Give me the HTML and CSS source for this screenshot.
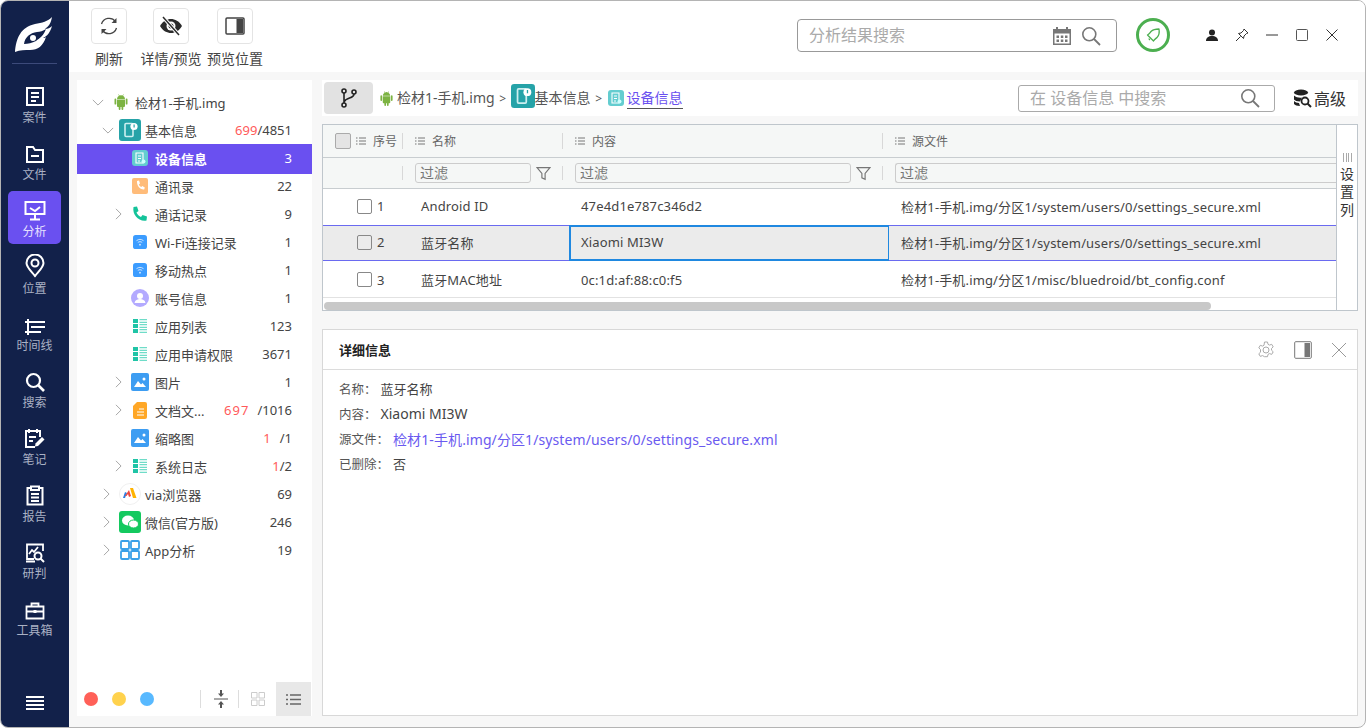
FILE: index.html
```html
<!DOCTYPE html>
<html lang="zh-CN">
<head>
    <meta charset="UTF-8">
    <title>分析</title>
    <link rel="stylesheet" href="styles.css">
</head>
<body>
    <svg class="sprite" xmlns="http://www.w3.org/2000/svg">
        <symbol id="android" viewBox="0 0 16 16"><path fill="#7cb342" d="M4 5.500h8v6.600a1 1 0 0 1-1 1h-.7V15a.9.9 0 0 1-1.800 0v-1.900H7.500V15a.9.9 0 0 1-1.800 0v-1.900H5a1 1 0 0 1-1-1zM1.500 5.500a.9.9 0 0 1 1.800 0v4.200a.9.9 0 0 1-1.800 0zM12.700 5.500a.9.9 0 0 1 1.800 0v4.200a.9.9 0 0 1-1.800 0zM4 5a4 4 0 0 1 2-3.200L5.200.6l.4-.3.900 1.200a4 4 0 0 1 3 0l.9-1.200.4.300-.8 1.200A4 4 0 0 1 12 5z"/></symbol>
        <symbol id="info" viewBox="0 0 22 22"><rect width="22" height="22" rx="3" fill="#26a3a8"/><rect x="6" y="4.500" width="8" height="13" rx="1" fill="none" stroke="#cdeff0" stroke-width="1.600"/><circle cx="15" cy="7.500" r="3.600" fill="#fff"/><rect x="14.500" y="5.500" width="1.200" height="3" fill="#26a3a8"/></symbol>
        <symbol id="device" viewBox="0 0 16 16"><rect width="16" height="16" rx="3" fill="#63cdd0"/><path d="M4 3h7v10H4zM6 6h3M6 8.500h3M6 11h2" fill="none" stroke="#fff" stroke-width="1.100"/><circle cx="11.500" cy="11.500" r="2" fill="#cff"/></symbol>
        <symbol id="wifi" viewBox="0 0 16 16"><rect width="16" height="16" rx="3" fill="#3b9cff"/><path d="M4 6.500c2.500-2 5.500-2 8 0M5.500 8.500c1.500-1.100 3.500-1.100 5 0" fill="none" stroke="#cfe6ff" stroke-width="1.100"/><circle cx="8" cy="11" r="1.100" fill="#cfe6ff"/></symbol>
        <symbol id="lines" viewBox="0 0 14 16"><path fill="#1fc4a6" d="M0 1h5v4H0zM0 6h5v4H0zM0 11h5v4H0z"/><path fill="#6fdcc8" d="M6.500 1H14v1.300H6.500zM6.500 3.700H14V5H6.500zM6.500 6H14v1.300H6.500zM6.500 8.700H14V10H6.500zM6.500 11H14v1.300H6.500zM6.500 13.700H14V15H6.500z"/></symbol>
        <symbol id="pic" viewBox="0 0 18 18"><rect width="18" height="18" rx="2" fill="#3d9df2"/><path fill="#fff" d="M3 14l4-6 3 3.500 1.500-1.500 3.500 4z"/><circle cx="13" cy="6" r="1.500" fill="#fff"/></symbol>
        <symbol id="rows" viewBox="0 0 10 8"><path fill="none" stroke="#777" d="M0 1h1.500M3 1h7M0 4h1.500M3 4h7M0 7h1.500M3 7h7"/></symbol>
        <symbol id="funnel" viewBox="0 0 14 14"><path fill="none" stroke="#777" stroke-width="1.100" d="M1 1.500h12L8.500 7v5.500l-3-1.500V7z"/></symbol>
        <symbol id="glass" viewBox="0 0 20 20"><circle cx="8.300" cy="8.300" r="6.500" fill="none" stroke="#777" stroke-width="1.600"/><path d="M13 13l6 6" stroke="#777" stroke-width="1.800"/></symbol>
        <symbol id="right" viewBox="0 0 8 14"><path fill="none" stroke="#999" d="M1 1l6 6-6 6"/></symbol>
        <symbol id="down" viewBox="0 0 14 8"><path fill="none" stroke="#999" d="M1 1l6 6 6-6"/></symbol>
    </svg>

    <div class="app">
        <nav class="sidebar">
            <div class="logo">
                <svg width="38" height="36" viewBox="0 0 38 36"><path fill="#fff" d="M0 35C1 21 6 10 20 7c7-1 13-3 17-7-1 6-3 9-7 12 3 0 5-1 7-3-2 7-5 10-9 12 1 0 2 0 3-1-3 9-8 13-16 13-5 0-10 0-15 2z"/><path fill="#12214a" d="M9 27c1-7 6-11 13-12 3 0 6-1 9-3-2 6-6 9-10 12-4 2-8 3-12 3z"/><circle cx="18" cy="21" r="3" fill="#fff"/></svg>
            </div>
            <a class="nav-item">
                <svg width="20" height="21" viewBox="0 0 20 21"><path fill="none" stroke="#fff" stroke-width="2" d="M2 2h16v17H2zM6 7h8M6 11h8M6 15h5"/></svg>
                <span>案件</span>
            </a>
            <a class="nav-item">
                <svg width="20" height="19" viewBox="0 0 20 19"><path fill="none" stroke="#fff" stroke-width="2" d="M2 2h6l2 3h8v12H2zM6 11h8"/></svg>
                <span>文件</span>
            </a>
            <a class="nav-item active">
                <svg width="22" height="21" viewBox="0 0 22 21"><path fill="none" stroke="#fff" stroke-width="2" d="M1.500 2h19v12h-19zM6 8l5 3 5-4M11 14v5M6 19.500h10"/></svg>
                <span>分析</span>
            </a>
            <a class="nav-item">
                <svg width="20" height="24" viewBox="0 0 20 24"><path fill="none" stroke="#fff" stroke-width="2" d="M10 22C5 16 1.500 13 1.500 9a8.500 8.500 0 0 1 17 0c0 4-3.500 7-8.500 13z"/><circle cx="10" cy="9" r="3.500" fill="none" stroke="#fff" stroke-width="2"/></svg>
                <span>位置</span>
            </a>
            <a class="nav-item">
                <svg width="20" height="16" viewBox="0 0 20 16"><path fill="none" stroke="#fff" stroke-width="2" d="M3 0v16M0 3h20M6 8h14M0 13h16"/></svg>
                <span>时间线</span>
            </a>
            <a class="nav-item">
                <svg width="20" height="20" viewBox="0 0 20 20"><circle cx="8.500" cy="8.500" r="6.500" fill="none" stroke="#fff" stroke-width="2.200"/><path d="M13 13l6 6" stroke="#fff" stroke-width="2.600"/></svg>
                <span>搜索</span>
            </a>
            <a class="nav-item">
                <svg width="21" height="21" viewBox="0 0 21 21"><path fill="none" stroke="#fff" stroke-width="2" d="M16 9V3H2v16h9M5 1v4M13 1v4M5 9h7M5 13h4"/><path fill="#fff" d="M18 9l2.500 2.500L14 18l-3 .5.500-3z"/></svg>
                <span>笔记</span>
            </a>
            <a class="nav-item">
                <svg width="18" height="21" viewBox="0 0 18 21"><path fill="none" stroke="#fff" stroke-width="2" d="M5 3H1.500v16.500h15V3H13M5 1.500h8V5H5zM5 9h8M5 12.500h8M5 16h8"/></svg>
                <span>报告</span>
            </a>
            <a class="nav-item">
                <svg width="20" height="20" viewBox="0 0 20 20"><path fill="none" stroke="#fff" stroke-width="1.800" d="M18 8V1.500H2V16h7M1 18.500h9M4 11l3-4 2 2 4-5"/><circle cx="13" cy="13" r="3.500" fill="none" stroke="#fff" stroke-width="2"/><path d="M15.500 15.500l3.500 3.500" stroke="#fff" stroke-width="2"/></svg>
                <span>研判</span>
            </a>
            <a class="nav-item">
                <svg width="20" height="18" viewBox="0 0 20 18"><path fill="none" stroke="#fff" stroke-width="1.800" d="M1.500 4.500h17v12h-17zM6.500 4.500V1.500h7v3M1.500 9.500h17"/><rect x="8.500" y="8" width="3" height="3" fill="#fff"/></svg>
                <span>工具箱</span>
            </a>
            <div class="hamburger"><i></i><i></i><i></i><i></i></div>
        </nav>

        <div class="main">
            <header class="topbar">
                <div class="tool">
                    <div class="tool-btn">
                        <svg width="20" height="20" viewBox="0 0 20 20"><path fill="none" stroke="#444" stroke-width="1.300" d="M2.500 8a8 8 0 0 1 14-2.500M17.500 12a8 8 0 0 1-14 2.500"/><path fill="#444" d="M17.500 2v5h-5zM2.500 18v-5h5z"/></svg>
                    </div>
                    <span>刷新</span>
                </div>
                <div class="tool">
                    <div class="tool-btn">
                        <svg width="22" height="20" viewBox="0 0 22 20"><path fill="#2b2b2b" d="M0 10c3-5 7-7 11-7s8 2 11 7c-3 5-7 7-11 7s-8-2-11-7z"/><circle cx="11" cy="10" r="4.500" fill="#fff"/><circle cx="11" cy="10" r="2.500" fill="#2b2b2b"/><path d="M3 1l16 18" stroke="#fff" stroke-width="3.500"/><path d="M3 1l16 18" stroke="#2b2b2b" stroke-width="1.500"/></svg>
                    </div>
                    <span>详情/预览</span>
                </div>
                <div class="tool">
                    <div class="tool-btn">
                        <svg width="20" height="18" viewBox="0 0 20 18"><rect x="1" y="1" width="18" height="16" rx="1" fill="none" stroke="#444" stroke-width="1.500"/><rect x="11.500" y="2" width="6.500" height="14" fill="#444"/></svg>
                    </div>
                    <span>预览位置</span>
                </div>
                <div class="top-search">
                    <span class="placeholder">分析结果搜索</span>
                    <svg width="20" height="20" viewBox="0 0 20 20"><path fill="#777" d="M1 3h18v16H1zM2.500 7.500v10h15v-10z"/><path fill="#777" d="M4 1h2v4H4zM14 1h2v4h-2zM4.500 9.500h2.500V12H4.500zM8.800 9.500h2.500V12H8.800zM13 9.500h2.500V12H13zM4.500 13.500h2.500V16H4.500zM8.800 13.500h2.500V16H8.800zM13 13.500h2.500V16H13z"/></svg>
                    <svg class="glass-icon" width="20" height="20"><use href="#glass"/></svg>
                </div>
                <div class="bell">
                    <svg width="18" height="18" viewBox="0 0 18 18"><path fill="none" stroke="#4caf50" stroke-width="1.300" stroke-linejoin="round" d="M15 3c-3 0-6 .5-8 2.500-1 1-1.500 2.500-3.500 3.500l6 6c1-2 2.500-2.500 3.500-3.500 2-2 2.500-5.500 2-8.500zM5 12.500a2 2 0 0 0 1 1.500"/></svg>
                </div>
                <div class="win-btns">
                    <svg width="14" height="14" viewBox="0 0 14 14"><circle cx="7" cy="4.500" r="3" fill="#222"/><path fill="#222" d="M1 13c0-3.500 2.500-5 6-5s6 1.500 6 5z"/></svg>
                    <svg width="14" height="14" viewBox="0 0 14 14"><path fill="none" stroke="#333" d="M9 1l4 4-1.500.5L9 8l-.5 2.500L3.500 5.500 6 5l2.500-2.500zM5.500 8.500L1 13"/></svg>
                    <svg width="14" height="14" viewBox="0 0 14 14"><path stroke="#333" d="M1 7h12"/></svg>
                    <svg width="14" height="14" viewBox="0 0 14 14"><rect x="1.500" y="1.500" width="11" height="11" rx="1" fill="none" stroke="#555"/></svg>
                    <svg width="14" height="14" viewBox="0 0 14 14"><path stroke="#333" d="M1.500 1.500l11 11M12.500 1.500l-11 11"/></svg>
                </div>
            </header>

            <div class="content">
                <aside class="tree">
                    <div class="row lv0"><svg class="arrow" width="12" height="7"><use href="#down"/></svg><svg class="ic" width="16" height="16"><use href="#android"/></svg><span class="name">检材1-手机.img</span></div>
                    <div class="row lv1"><svg class="arrow" width="12" height="7"><use href="#down"/></svg><svg class="ic-big" width="22" height="22"><use href="#info"/></svg><span class="name">基本信息</span><span class="count"><b>699</b>/4851</span></div>
                    <div class="row lv2 selected"><svg class="ic" width="16" height="16"><use href="#device"/></svg><span class="name">设备信息</span><span class="count">3</span></div>
                    <div class="row lv2"><svg class="ic" width="16" height="16" viewBox="0 0 16 16"><rect width="16" height="16" rx="2" fill="#ffbc7a"/><path fill="#fff" d="M5 3l2-.5 1 3-1.200 1c.5 1.300 1.200 2 2.500 2.600l1-1.100 2.500 1.500-.6 2c-4 .5-7.500-3.500-7.200-8.500z"/></svg><span class="name">通讯录</span><span class="count">22</span></div>
                    <div class="row lv2"><svg class="arrow" width="7" height="12"><use href="#right"/></svg><svg class="ic" width="16" height="16" viewBox="0 0 16 16"><path fill="#14c39a" d="M1.500 1L5 .5l1.500 4.500-2 1.500c1 2 2.500 3.500 4.500 4.500l1.500-2L15 10.500l-.5 4C7 16 0 9 1.500 1z"/></svg><span class="name">通话记录</span><span class="count">9</span></div>
                    <div class="row lv2"><svg class="ic" width="14" height="14"><use href="#wifi"/></svg><span class="name">Wi-Fi连接记录</span><span class="count">1</span></div>
                    <div class="row lv2"><svg class="ic" width="14" height="14"><use href="#wifi"/></svg><span class="name">移动热点</span><span class="count">1</span></div>
                    <div class="row lv2"><svg class="ic" width="18" height="18" viewBox="0 0 18 18"><circle cx="9" cy="9" r="9" fill="#b3aaff"/><circle cx="9" cy="7" r="3" fill="#fff"/><path fill="#fff" d="M3.500 14c.5-3 3-4 5.500-4s5 1 5.500 4z"/></svg><span class="name">账号信息</span><span class="count">1</span></div>
                    <div class="row lv2"><svg class="ic" width="14" height="16"><use href="#lines"/></svg><span class="name">应用列表</span><span class="count">123</span></div>
                    <div class="row lv2"><svg class="ic" width="14" height="16"><use href="#lines"/></svg><span class="name">应用申请权限</span><span class="count">3671</span></div>
                    <div class="row lv2"><svg class="arrow" width="7" height="12"><use href="#right"/></svg><svg class="ic" width="18" height="18"><use href="#pic"/></svg><span class="name">图片</span><span class="count">1</span></div>
                    <div class="row lv2"><svg class="arrow" width="7" height="12"><use href="#right"/></svg><svg class="ic" width="14" height="17" viewBox="0 0 14 17"><path fill="#ffa726" d="M4 0h8a2 2 0 0 1 2 2v13a2 2 0 0 1-2 2H2a2 2 0 0 1-2-2V4z"/><path stroke="#fff" d="M6 7h5M4 10h7M4 13h7"/></svg><span class="name">文档文...</span><span class="count"><b class="wide">697</b>/1016</span></div>
                    <div class="row lv2"><svg class="ic" width="18" height="18"><use href="#pic"/></svg><span class="name">缩略图</span><span class="count"><b class="wide">1</b>/1</span></div>
                    <div class="row lv2"><svg class="arrow" width="7" height="12"><use href="#right"/></svg><svg class="ic" width="14" height="16"><use href="#lines"/></svg><span class="name">系统日志</span><span class="count"><b>1</b>/2</span></div>
                    <div class="row lv1"><svg class="arrow" width="7" height="12"><use href="#right"/></svg><svg class="ic-big" width="22" height="22" viewBox="0 0 22 22"><circle cx="11" cy="11" r="10.500" fill="#fff" stroke="#f0f0f0"/><path fill="#2f7de1" d="M4 15l2-6 2 1-2 5z"/><path fill="#f0483e" d="M6 13l4-6 2 6-2 1-1-3-1.500 2z"/><path fill="#ffb300" d="M11 5h3l3.500 10h-3.500z"/></svg><span class="name">via浏览器</span><span class="count">69</span></div>
                    <div class="row lv1"><svg class="arrow" width="7" height="12"><use href="#right"/></svg><svg class="ic-big" width="22" height="22" viewBox="0 0 22 22"><rect width="22" height="22" rx="3" fill="#14c95f"/><ellipse cx="9" cy="9.500" rx="6" ry="5" fill="#fff"/><ellipse cx="14.500" cy="13" rx="5" ry="4" fill="#fff" stroke="#14c95f"/></svg><span class="name">微信(官方版)</span><span class="count">246</span></div>
                    <div class="row lv1"><svg class="arrow" width="7" height="12"><use href="#right"/></svg><svg class="ic-big" width="22" height="22" viewBox="0 0 22 22"><path fill="none" stroke="#3aa0e8" stroke-width="1.800" d="M3 2h6a1 1 0 0 1 1 1v6a1 1 0 0 1-1 1H3a1 1 0 0 1-1-1V3a1 1 0 0 1 1-1zM13 2h6a1 1 0 0 1 1 1v6a1 1 0 0 1-1 1h-6a1 1 0 0 1-1-1V3a1 1 0 0 1 1-1zM3 12h6a1 1 0 0 1 1 1v6a1 1 0 0 1-1 1H3a1 1 0 0 1-1-1v-6a1 1 0 0 1 1-1zM13 12h6a1 1 0 0 1 1 1v6a1 1 0 0 1-1 1h-6a1 1 0 0 1-1-1v-6a1 1 0 0 1 1-1z"/></svg><span class="name">App分析</span><span class="count">19</span></div>

                    <div class="tree-foot">
                        <i class="dot red"></i><i class="dot yellow"></i><i class="dot blue"></i>
                        <div class="foot-tools">
                            <svg class="foot-btn sep" width="14" height="18" viewBox="0 0 14 18"><path stroke="#555" d="M0 9h14"/><path fill="#555" d="M7 7L4 3.500h2V0h2v3.500h2zM7 11l3 3.500H8V18H6v-3.500H4z"/></svg>
                            <div class="foot-btn sep"><svg width="14" height="14" viewBox="0 0 14 14"><path fill="none" stroke="#ccc" d="M.5.500h5.500v5.500H.5zM8 .5h5.500v5.500H8zM.5 8h5.500v5.500H.5zM8 8h5.500v5.500H8z"/></svg></div>
                            <div class="foot-btn on"><svg width="15" height="11" viewBox="0 0 15 11"><path stroke="#666" stroke-width="1.500" d="M0 1h2M4 1h11M0 5.500h2M4 5.500h11M0 10h2M4 10h11"/></svg></div>
                        </div>
                    </div>
                </aside>

                <section class="right">
                    <div class="crumbs">
                        <button class="branch"><svg width="18" height="20" viewBox="0 0 18 20"><g fill="none" stroke="#222" stroke-width="1.600"><circle cx="4" cy="3" r="2"/><circle cx="4" cy="17" r="2"/><circle cx="14" cy="4" r="2"/><path d="M4 5v10M14 6c0 5-8 3-10 8"/></g></svg></button>
                        <svg class="c-android" width="15" height="15"><use href="#android"/></svg>
                        <span class="c-text">检材1-手机.img</span>
                        <span class="c-sep">&gt;</span>
                        <svg class="c-info" width="24" height="24"><use href="#info"/></svg>
                        <span class="c-text">基本信息</span>
                        <span class="c-sep">&gt;</span>
                        <svg class="c-device" width="16" height="16"><use href="#device"/></svg>
                        <span class="c-current">设备信息</span>
                        <div class="sub-search">
                            <span class="placeholder">在 设备信息 中搜索</span>
                            <svg width="20" height="20"><use href="#glass"/></svg>
                        </div>
                        <div class="advanced">
                            <svg width="19" height="19" viewBox="0 0 19 19"><ellipse cx="8" cy="3.500" rx="7" ry="3" fill="#222"/><path fill="#222" d="M1 6.500c2 2 6 2.500 8 2l-2 4c-3 0-5-1-6-2zM1 12c1 1 3 2 5 2l1 3c-3 0-5-1-6-2z"/><circle cx="12" cy="12" r="3.500" fill="#fff" stroke="#222" stroke-width="1.800"/><path d="M14.500 14.500L18 18" stroke="#222" stroke-width="2"/></svg>
                            <span>高级</span>
                        </div>
                    </div>

                    <div class="grid-box">
                        <div class="grid-main">
                            <div class="tr head">
                                <div class="th first"><i class="head-check"></i><svg width="10" height="8"><use href="#rows"/></svg>序号</div>
                                <div class="th"><svg width="10" height="8"><use href="#rows"/></svg>名称</div>
                                <div class="th"><svg width="10" height="8"><use href="#rows"/></svg>内容</div>
                                <div class="th"><svg width="10" height="8"><use href="#rows"/></svg>源文件</div>
                            </div>
                            <div class="tr filters">
                                <div class="th first"></div>
                                <div class="th"><span class="filter">过滤</span><svg width="15" height="15"><use href="#funnel"/></svg></div>
                                <div class="th"><span class="filter">过滤</span><svg width="15" height="15"><use href="#funnel"/></svg></div>
                                <div class="th"><span class="filter open">过滤</span></div>
                            </div>
                            <div class="tr body r1">
                                <div class="td first"><i class="check"></i>1</div>
                                <div class="td">Android ID</div>
                                <div class="td">47e4d1e787c346d2</div>
                                <div class="td">检材1-手机.img/分区1/system/users/0/settings_secure.xml</div>
                            </div>
                            <div class="tr body current r2">
                                <div class="td first"><i class="check"></i>2</div>
                                <div class="td">蓝牙名称</div>
                                <div class="td focus">Xiaomi MI3W</div>
                                <div class="td">检材1-手机.img/分区1/system/users/0/settings_secure.xml</div>
                            </div>
                            <div class="tr body r3">
                                <div class="td first"><i class="check"></i>3</div>
                                <div class="td">蓝牙MAC地址</div>
                                <div class="td">0c:1d:af:88:c0:f5</div>
                                <div class="td">检材1-手机.img/分区1/misc/bluedroid/bt_config.conf</div>
                            </div>
                            <div class="scroll"><div class="thumb"></div></div>
                        </div>
                        <div class="col-set">
                            <span class="col-bars"></span>
                            <span>设</span><span>置</span><span>列</span>
                        </div>
                    </div>

                    <div class="detail">
                        <div class="detail-head">
                            <span>详细信息</span>
                            <div class="detail-tools">
                                <svg width="18" height="18" viewBox="0 0 18 18"><circle cx="9" cy="9" r="3" fill="none" stroke="#aaa"/><path fill="none" stroke="#aaa" d="M7.500 1h3l.5 2.300 1.500.8 2.200-.8 1.500 2.600-1.700 1.600v1.700l1.700 1.600-1.500 2.600-2.200-.8-1.500.8-.5 2.300h-3L7 15.400l-1.500-.8-2.200.8-1.500-2.600 1.700-1.600V8.500L1.800 6.900l1.500-2.600 2.200.8L7 4.300z"/></svg>
                                <svg width="18" height="18" viewBox="0 0 18 18"><rect x=".7" y=".7" width="16.600" height="16.600" rx="1" fill="none" stroke="#777"/><rect x="10.500" y="2" width="5.500" height="14" fill="#777"/></svg>
                                <svg width="16" height="16" viewBox="0 0 16 16"><path stroke="#999" d="M1 1l14 14M15 1L1 15"/></svg>
                            </div>
                        </div>
                        <div class="detail-body">
                            <div class="kv"><label>名称：</label><span class="cjk">蓝牙名称</span></div>
                            <div class="kv"><label>内容：</label><span>Xiaomi MI3W</span></div>
                            <div class="kv"><label>源文件：</label><a>检材1-手机.img/分区1/system/users/0/settings_secure.xml</a></div>
                            <div class="kv"><label>已删除：</label><span class="cjk">否</span></div>
                        </div>
                    </div>
                </section>
            </div>
        </div>
    </div>
</body>
</html>
```

FILE: styles.css
```css
html, body {
    margin: 0;
    height: 100%;
    overflow: hidden;
}

body {
    font-family: "Noto Sans", "Noto Sans CJK SC", sans-serif;
    font-size: 13px;
    color: #444;
    background: #fff;
}

.sprite {
    display: none;
}

.app {
    display: flex;
    width: 1366px;
    height: 728px;
    box-sizing: border-box;
    border: 1px solid #b4b4b4;
    border-radius: 8px;
    overflow: hidden;
    background: #f7f7f7;
}

/* left nav */
.sidebar {
    width: 68px;
    flex-shrink: 0;
    box-sizing: border-box;
    padding-right: 1px;
    display: flex;
    flex-direction: column;
    align-items: center;
    background: #12214a;
}

.logo {
    width: 45px;
    height: 63px;
    box-sizing: border-box;
    padding-top: 16px;
    padding-left: 3px;
    margin-bottom: 13px;
    border-bottom: 1px solid #3c4a7a;
}

.nav-item {
    width: 53px;
    height: 53px;
    margin-bottom: 4px;
    display: flex;
    flex-direction: column;
    align-items: center;
    justify-content: flex-end;
    gap: 2px;
    border-radius: 5px;
    color: #aab1c4;
    font-size: 12px;
    line-height: 17px;
}

.nav-item span {
    padding-bottom: 4px;
}

.nav-item.active {
    background: #6a50f0;
    color: #e6e0ff;
}

.hamburger {
    margin-top: auto;
    margin-bottom: 17px;
    width: 18px;
    display: flex;
    flex-direction: column;
    gap: 2px;
}

.hamburger i {
    display: block;
    height: 2px;
    background: #fff;
}

.main {
    flex: 1;
    display: flex;
    flex-direction: column;
    min-width: 0;
}

/* top toolbar */
.topbar {
    height: 71px;
    flex-shrink: 0;
    display: flex;
    background: #fff;
    box-sizing: border-box;
    padding: 7px 26px 0 22px;
}

.tool {
    display: flex;
    flex-direction: column;
    align-items: center;
    width: 36px;
    margin-right: 26px;
    color: #444;
    font-size: 14px;
    white-space: nowrap;
    line-height: 18px;
    gap: 6px;
}

.tool:nth-child(2) {
    margin-right: 28px;
}

.tool-btn {
    width: 36px;
    height: 36px;
    flex-shrink: 0;
    box-sizing: border-box;
    border: 1px solid #e4e4e4;
    border-radius: 4px;
    display: flex;
    align-items: center;
    justify-content: center;
}

.top-search {
    margin-left: auto;
    margin-top: 11px;
    width: 320px;
    height: 33px;
    box-sizing: border-box;
    border: 1px solid #999;
    border-radius: 4px;
    display: flex;
    align-items: center;
    padding: 0 15px 0 11px;
}

.placeholder {
    flex: 1;
    padding-bottom: 3px;
    font-size: 16px;
    color: #aaa;
}

.glass-icon {
    margin-left: 9px;
}

.bell {
    width: 34px;
    height: 34px;
    box-sizing: border-box;
    margin: 10px 0 0 19px;
    border: 3px solid #4caf50;
    border-radius: 50%;
    display: flex;
    align-items: center;
    justify-content: center;
}

.win-btns {
    display: flex;
    align-items: center;
    gap: 16px;
    height: 54px;
    margin-left: 35px;
}

/* tree panel */
.content {
    flex: 1;
    display: flex;
    padding: 8px 7px 11px 8px;
    min-height: 0;
}

.tree {
    width: 235px;
    flex-shrink: 0;
    display: flex;
    flex-direction: column;
    box-sizing: border-box;
    padding-top: 9px;
    background: #fff;
}

.row {
    position: relative;
    display: flex;
    align-items: center;
    height: 28px;
    flex-shrink: 0;
    box-sizing: border-box;
    padding-right: 20px;
    padding-bottom: 2px;
    color: #444;
    white-space: nowrap;
}

.row .arrow {
    position: absolute;
}

.lv0 .arrow { left: 15px; }
.lv1 .arrow { left: 26px; }
.lv2 .arrow { left: 38px; }
.lv1 svg[height="7"] { left: 25px; }

.ic {
    position: absolute;
    left: 63px;
    transform: translateX(-50%);
}

.lv0 .ic { left: 44px; }

.ic-big {
    position: absolute;
    left: 42px;
}

.lv0 .name { margin-left: 58px; }
.lv1 .name { margin-left: 68px; }
.lv2 .name { margin-left: 78px; }

.count {
    margin-left: auto;
}

.count b {
    font-weight: 400;
    color: #ff5a5a;
}

.count b.wide {
    letter-spacing: 1px;
    margin-right: 8px;
}

.selected {
    height: 30px;
    margin: -1px 0;
    background: #6a50f0;
    color: #fff;
    font-weight: 700;
}

.selected .count {
    font-weight: 400;
}

.tree-foot {
    margin-top: auto;
    height: 34px;
    display: flex;
    align-items: center;
    padding-left: 7px;
}

.dot {
    width: 14px;
    height: 14px;
    border-radius: 50%;
    margin-right: 14px;
}

.red { background: #ff6058; }
.yellow { background: #ffd24d; }
.blue { background: #58b9ff; }

.foot-tools {
    margin-left: auto;
    margin-right: 1px;
    display: flex;
    align-items: center;
    height: 100%;
}

.foot-btn {
    display: flex;
    align-items: center;
    justify-content: center;
}

svg.foot-btn {
    padding: 0 10px 0 13px;
    border-left: 1px solid #ddd;
    border-right: 1px solid #ddd;
}

div.foot-btn.sep {
    width: 37px;
}

.foot-btn.on {
    width: 35px;
    height: 34px;
    background: #e8e8e8;
}

/* right side */
.right {
    flex: 1;
    min-width: 0;
    margin-left: 10px;
    display: flex;
    flex-direction: column;
}

.crumbs {
    height: 36px;
    flex-shrink: 0;
    display: flex;
    align-items: center;
    background: #fff;
    padding-left: 2px;
    color: #555;
}

.branch {
    width: 49px;
    height: 32px;
    border: 0;
    border-radius: 4px;
    background: #e2e2e2;
    display: flex;
    align-items: center;
    justify-content: center;
    padding: 0;
}

.c-android {
    margin: 0 3px 0 6px;
}

.c-text {
    padding-bottom: 2px;
    font-size: 14px;
    color: #555;
}

.c-sep {
    width: 16px;
    text-align: center;
    font-size: 12px;
    color: #555;
}

.c-info {
    margin-bottom: 4px;
}

.c-device {
    margin-left: 1px;
    margin-right: 3px;
}

.c-current {
    font-size: 14px;
    color: #6a50f0;
    line-height: 20px;
    border-bottom: 1px solid #555;
}

.sub-search {
    margin-left: auto;
    width: 257px;
    height: 27px;
    box-sizing: border-box;
    border: 1px solid #aaa;
    border-radius: 3px;
    display: flex;
    align-items: center;
    padding: 0 14px 0 11px;
}

.advanced {
    display: flex;
    align-items: center;
    gap: 2px;
    width: 71px;
    justify-content: flex-end;
    margin-right: 12px;
    font-size: 16px;
    color: #333;
}

/* grid */
.grid-box {
    margin-top: 8px;
    height: 187px;
    flex-shrink: 0;
    box-sizing: border-box;
    display: flex;
    border: 1px solid #bfc6cc;
    background: #fff;
}

.grid-main {
    flex: 1;
    min-width: 0;
    display: flex;
    flex-direction: column;
}

.tr {
    display: grid;
    grid-template-columns: 80px 160px 320px 1fr;
    flex-shrink: 0;
}

.th {
    display: flex;
    align-items: center;
    gap: 7px;
    padding-left: 12px;
    font-size: 12px;
    color: #666;
    background: #f5f7f6;
    position: relative;
}

.th::after {
    content: "";
    position: absolute;
    right: 0;
    top: 8px;
    bottom: 8px;
    width: 1px;
    background: #d8d8d8;
}

.th:last-child::after {
    display: none;
}

.head {
    height: 33px;
    box-sizing: border-box;
    border-bottom: 1px solid #c8cdd0;
    background: #f5f7f6;
}

.filters {
    height: 31px;
    box-sizing: border-box;
    border-bottom: 1px solid #c8cdd0;
}

.filters .th {
    gap: 5px;
}

.head-check {
    width: 14px;
    height: 14px;
    border: 1px solid #aaa;
    border-radius: 2px;
    background: #e4e4e4;
    margin-right: -2px;
}

.filter {
    box-sizing: border-box;
    height: 20px;
    width: 116px;
    border: 1px solid #ccc;
    border-radius: 3px;
    padding-left: 4px;
    line-height: 18px;
    font-size: 14px;
    color: #777;
}

.filters .th:nth-child(3) .filter {
    width: 276px;
}

.filter.open {
    flex: 1;
    border-right: 0;
    border-radius: 3px 0 0 3px;
}

.body {
    grid-template-columns: 86px 160px 320px 1fr;
    height: 37px;
    box-sizing: border-box;
    border-bottom: 1px solid #e2e2e2;
    color: #444;
    letter-spacing: .15px;
}

.r1 .td { padding-bottom: 2px; }
.r2 .td { padding-bottom: 2px; }
.r3 .td { padding-top: 1px; }

.td {
    display: flex;
    align-items: center;
    padding-left: 12px;
    box-sizing: border-box;
    white-space: nowrap;
}

.td.first {
    padding-left: 34px;
    gap: 5px;
}

.check {
    width: 13px;
    height: 13px;
    border: 1px solid #888;
    border-radius: 2px;
    background: #fff;
}

.current {
    height: 36px;
    margin-top: -1px;
    background: #ebebeb;
    border-top: 1px solid #6a6af0;
    border-bottom: 1px solid #6a6af0;
}

.current .check {
    background: #ebebeb;
}

.focus {
    border: 2px solid #1f88e0;
    border-right-width: 1px;
    margin: -1px 0;
    padding-left: 10px;
}

.scroll {
    flex: 1;
    display: flex;
    align-items: flex-end;
    padding-left: 1px;
}

.thumb {
    width: 887px;
    height: 8px;
    border-radius: 4px;
    background: #c8c8c8;
}

.col-set {
    width: 21px;
    flex-shrink: 0;
    box-sizing: border-box;
    border-left: 1px solid #bfc6cc;
    display: flex;
    flex-direction: column;
    align-items: center;
    padding-top: 28px;
    color: #333;
    font-size: 14px;
    line-height: 18px;
}

.col-bars {
    width: 9px;
    height: 9px;
    margin-bottom: 3px;
    background: repeating-linear-gradient(90deg, #aaa 0 1px, transparent 1px 2.600px);
}

/* detail panel */
.detail {
    margin-top: 18px;
    flex: 1;
    min-height: 0;
    box-sizing: border-box;
    border: 1px solid #d8d8d8;
    background: #fff;
}

.detail-head {
    height: 40px;
    box-sizing: border-box;
    border-bottom: 1px solid #dcdcdc;
    display: flex;
    align-items: center;
    justify-content: space-between;
    padding: 0 10px 0 16px;
    font-weight: 700;
    color: #222;
}

.detail-tools {
    display: flex;
    align-items: center;
    gap: 19px;
}

.detail-body {
    padding: 6px 16px;
}

.kv {
    display: flex;
    align-items: center;
    height: 25px;
    font-size: 14px;
    color: #444;
}

.kv label {
    font-size: 12.500px;
    color: #555;
    margin-right: 4px;
}

.kv a {
    color: #6a5af0;
    letter-spacing: .1px;
}

.kv .cjk {
    font-size: 13px;
}
```
